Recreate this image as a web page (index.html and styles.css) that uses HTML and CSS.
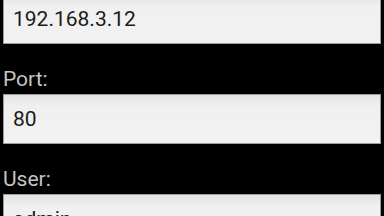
FILE: index.html
```html
<!DOCTYPE html>
<html lang="en">

<head>
    <meta charset="UTF-8" />
    <title>Camera settings</title>
    <link rel="stylesheet" href="styles.css">
</head>

<body>
    <div class="form">
        <!-- host (label scrolled out of view) -->
        <input class="field field-first" id="host" type="text" value="192.168.3.12" />

        <!-- port -->
        <label class="field-label" for="port">Port:</label>
        <input class="field" id="port" type="text" value="80" />

        <!-- user -->
        <label class="field-label" for="user">User:</label>
        <input class="field" id="user" type="text" value="admin" />
    </div>
</body>

</html>
```

FILE: styles.css
```css
* {
    margin: 0;
    padding: 0;
    box-sizing: border-box;
}

html,
body {
    height: 100%;
    overflow: hidden;
    background-color: #000;
}

body {
    font-family: Roboto, "Noto Sans", sans-serif;
}

.form {
    display: flex;
    flex-direction: column;
    padding: 0 3px;
}

.field-label {
    display: block;
    margin: 23px 0 3px;
    height: 24px;
    line-height: 24px;
    font-size: 21px;
    color: #c4c4c4;
}

.field {
    display: block;
    width: 100%;
    height: 50px;
    padding: 0 9px;
    border: 1px solid #9c9c9c;
    border-radius: 0;
    background: linear-gradient(#e4e4e4, #f0f0f0 25%, #f2f2f2);
    font-family: Roboto, "Noto Sans", sans-serif;
    font-size: 21px;
    color: #1a1a1a;
    outline: none;
}

.field-first {
    margin-top: -6px;
}
```
